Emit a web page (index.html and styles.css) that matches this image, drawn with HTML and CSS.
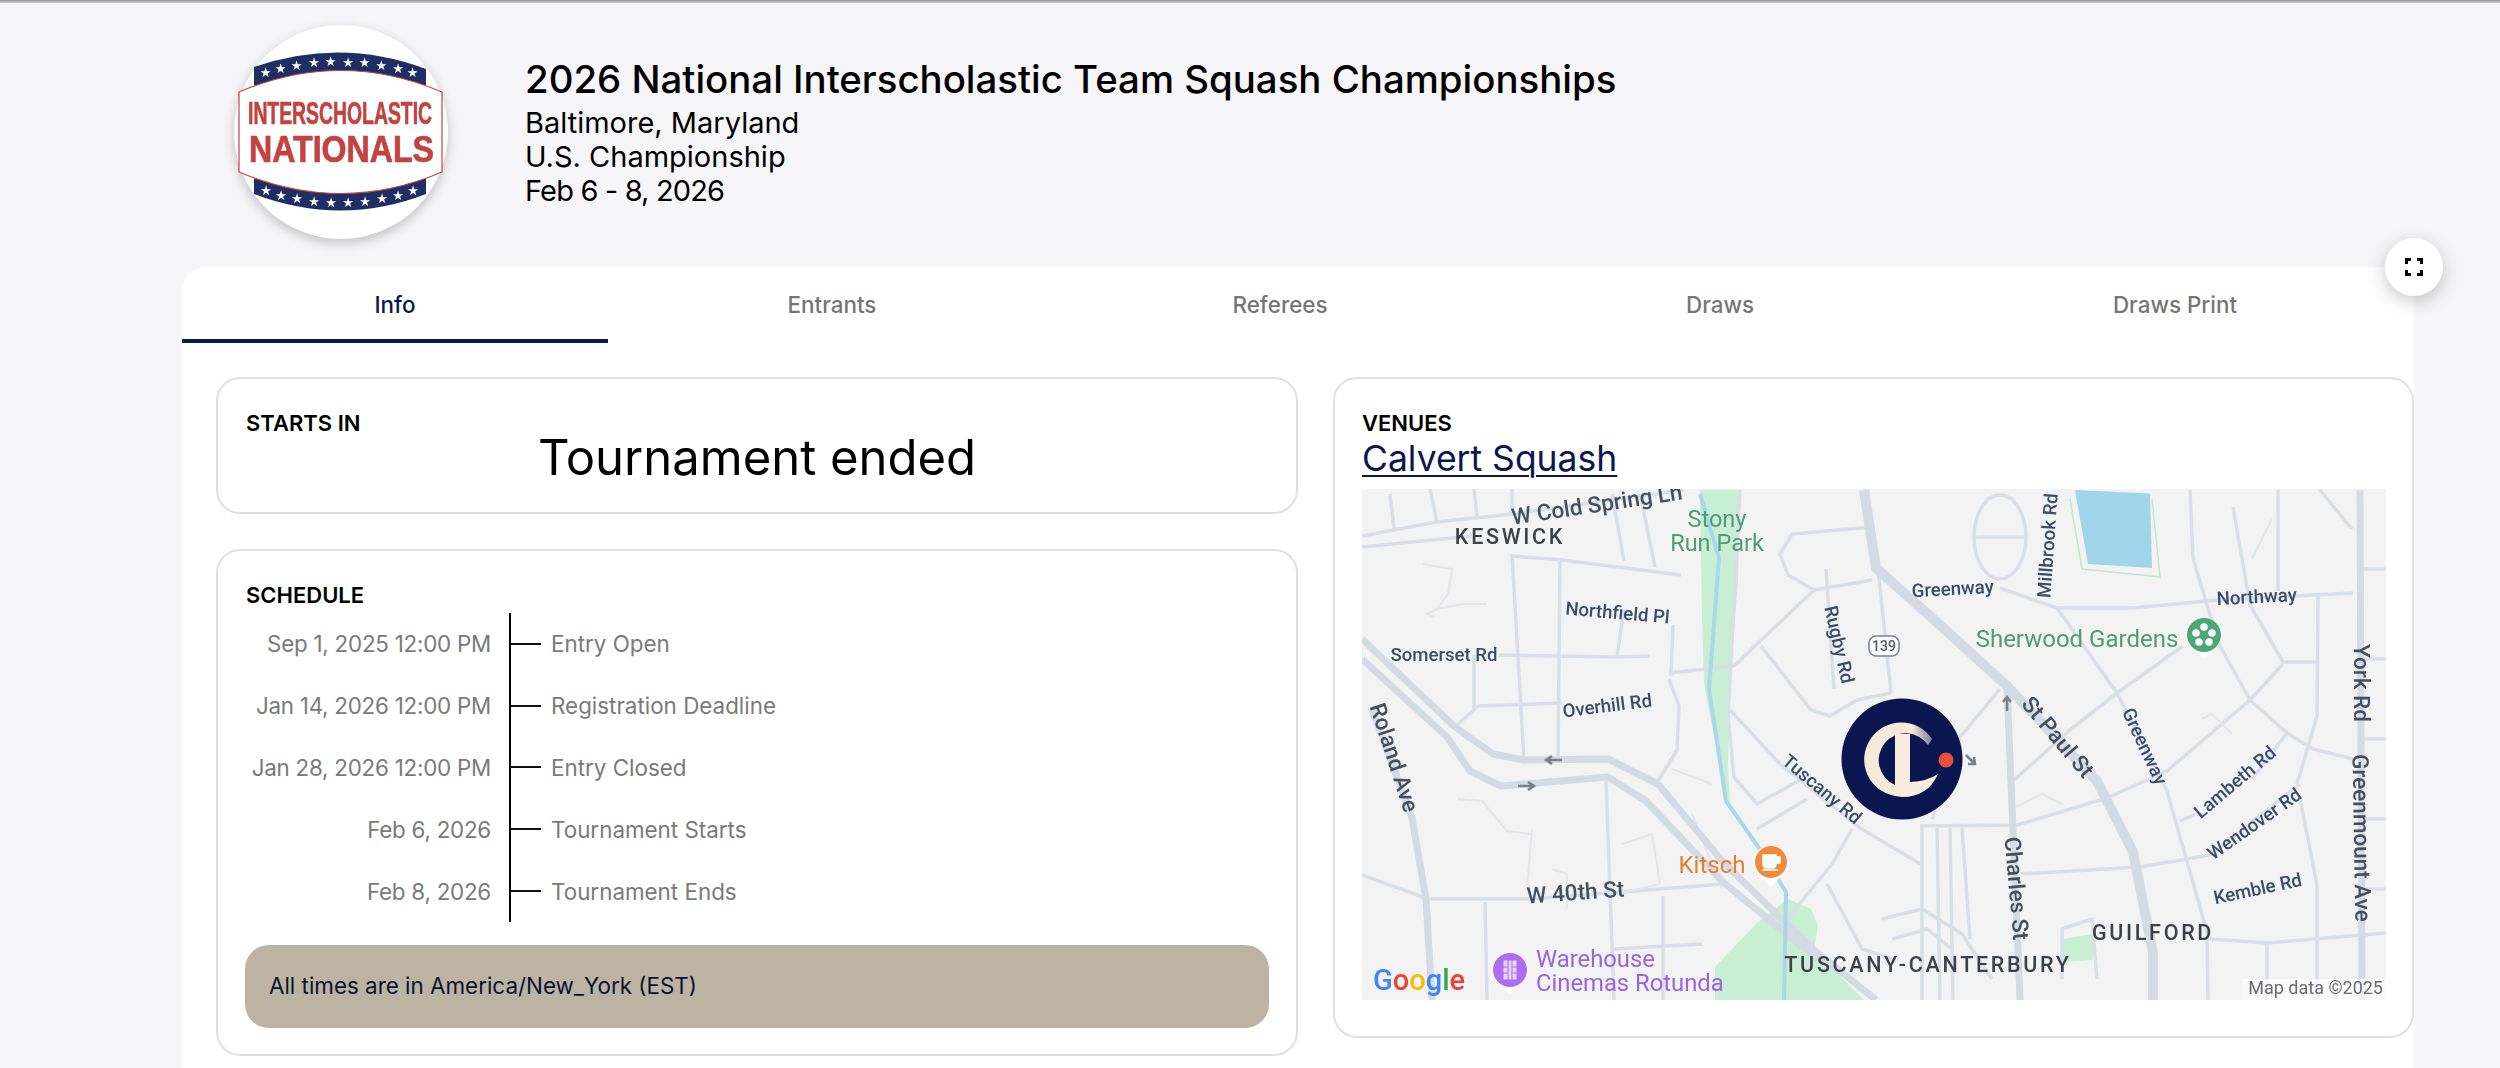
FILE: index.html
```html
<!DOCTYPE html>
<html lang="en">
<head>
<meta charset="utf-8">
<title>2026 National Interscholastic Team Squash Championships</title>
<link rel="stylesheet" href="styles.css">
</head>
<body>
<div class="topline"></div>
<div class="page">
  <header class="hero">
    <div class="crest">
      <svg viewBox="0 0 214 214" width="214" height="214">
        <path class="band" d="M20 42Q107 12 192 44V60H20Z"/>
        <path class="band" d="M20 154H192V169Q107 202 20 169Z"/>
        <g class="stars">
          <text x="31.7" y="52">★</text><text x="46.7" y="47.5">★</text><text x="62.7" y="45">★</text><text x="80" y="42">★</text><text x="96.7" y="41">★</text><text x="114" y="41.5">★</text><text x="130.7" y="42">★</text><text x="147.3" y="45">★</text><text x="164" y="47.5">★</text><text x="178.7" y="52">★</text>
          <text x="32" y="170">★</text><text x="47" y="175">★</text><text x="63" y="178">★</text><text x="80" y="180.5">★</text><text x="97" y="181.5">★</text><text x="114" y="181.5">★</text><text x="131" y="180.5">★</text><text x="148" y="178">★</text><text x="164" y="175">★</text><text x="179" y="170">★</text>
        </g>
        <path class="shield" d="M5 67Q107 24 208 67V147Q107 190 5 147Z"/>
        <text class="crest-a" x="14" y="99" textLength="184" lengthAdjust="spacingAndGlyphs">INTERSCHOLASTIC</text>
        <text class="crest-b" x="15" y="137" textLength="185" lengthAdjust="spacingAndGlyphs">NATIONALS</text>
      </svg>
    </div>
    <div class="hero-text">
      <h1>2026 National Interscholastic Team Squash Championships</h1>
      <p>Baltimore, Maryland</p>
      <p>U.S. Championship</p>
      <p class="when">Feb 6 - 8, 2026</p>
    </div>
  </header>

  <main class="panel">
    <button class="expand" aria-label="Full screen">
      <svg viewBox="0 0 18 18" width="18" height="18"><path d="M1.5 6V1.5H6M12 1.5H16.5V6M16.5 12V16.5H12M6 16.5H1.5V12"/></svg>
    </button>
    <nav class="tabs">
      <a class="tab active">Info</a>
      <a class="tab">Entrants</a>
      <a class="tab">Referees</a>
      <a class="tab">Draws</a>
      <a class="tab">Draws Print</a>
    </nav>
    <div class="content">
      <div class="col">
        <section class="card starts">
          <h2>STARTS IN</h2>
          <div class="ended">Tournament ended</div>
        </section>
        <section class="card schedule">
          <h2>SCHEDULE</h2>
          <div class="timeline">
            <div class="row"><span class="date">Sep 1, 2025 12:00 PM</span><span class="mark"></span><span class="what">Entry Open</span></div>
            <div class="row"><span class="date">Jan 14, 2026 12:00 PM</span><span class="mark"></span><span class="what">Registration Deadline</span></div>
            <div class="row"><span class="date">Jan 28, 2026 12:00 PM</span><span class="mark"></span><span class="what">Entry Closed</span></div>
            <div class="row"><span class="date">Feb 6, 2026</span><span class="mark"></span><span class="what">Tournament Starts</span></div>
            <div class="row"><span class="date">Feb 8, 2026</span><span class="mark"></span><span class="what">Tournament Ends</span></div>
          </div>
          <div class="note">All times are in America/New_York (EST)</div>
        </section>
      </div>
      <section class="card venues">
        <h2>VENUES</h2>
        <a class="venue-link">Calvert Squash</a>
        <svg class="map" viewBox="0 0 1024 511" width="1024" height="511">
          <defs>
            <linearGradient id="fade" x1="0" y1="0" x2="1" y2="0">
              <stop offset="0.7" stop-color="#f7ead9"/>
              <stop offset="1" stop-color="#7e8099"/>
            </linearGradient>
          </defs>
          <rect class="land" width="1024" height="511"/>
          <path class="park" d="M338 1L340 126L342 194L361 295L368 315L366 278L368 194L376 92L378 1Z"/>
          <path class="park" d="M426 410L449 420L456 437L452 461L502 511H353V478L395 434Z"/>
          <path class="park" d="M701 450L731 445V471L701 473Z"/>
          <path class="pond" d="M713 1L788 4.5L790 79L726 75Z"/>
          <path class="pond-edge" d="M708 10L720 80L798 88L790 10"/>
          <g class="r">
            <path d="M0 47L74 33L150 25L322 1"/>
            <path d="M0 58L110 47M28 5L32 40M68 0L75 33M112 0L115 27M150 0L150 25M250 5L262 72M278 5L293 78"/>
            <path d="M150 67L200 71L319 86"/>
            <path d="M150 65L162 271M198 72L196 271"/>
            <path d="M137 166L257 168L288 167M255 168L262 120M112 166L112 220"/>
            <path d="M93 238L116 217L200 214"/>
            <path d="M0 386L66 410L169 410L361 395"/>
            <path d="M66 410L70 511M123 413L125 511M244 292L252 511M301 407L301 511M252 460L340 455"/>
            <path d="M307 184L372 177L452 101L510 91"/>
            <path d="M307 190L317 217L315 261L296 292M311 136L309 187"/>
            <path d="M378 1L366 228L372 288L395 315L440 290M395 340L445 310"/>
            <path d="M368 221L418 275L498 339L560 376"/>
            <path d="M399 157L449 221L468 227L495 211L529 204"/>
            <path d="M510 38L430 45L418 65L426 86L452 101M464 80L472 200"/>
            <path d="M502 1L517 89L529 204"/>
            <path d="M638 99L695 119L771 119L855 111L991 104"/>
            <path d="M695 119L755 204L805 302L845 443L846 511"/>
            <path d="M821 157L755 204L708 241L651 292"/>
            <path d="M598 248L638 200M570 330L598 248"/>
            <path d="M921 175L888 211L805 282L745 309L655 336L558 337"/>
            <path d="M560 337V511M575 339L578 511M588 339L591 511M600 339L608 450"/>
            <path d="M828 1L831 69L845 116L858 157L888 211L925 244L951 260L991 270"/>
            <path d="M871 18L888 116L921 173L955 173"/>
            <path d="M956 106L955 227L935 295"/>
            <path d="M916 1V102M958 1L990 40"/>
            <path d="M818 332L833 325M925 244L890 290"/>
            <path d="M658 385L778 378L848 366L938 295"/>
            <path d="M848 450L905 454L1024 444M905 454V511M1000 80H1024M1000 170H1024M1000 250H1024M1000 330H1024M1000 400H1024"/>
            <path d="M938 309L955 396L955 511"/>
            <path d="M700 490V440L730 430L735 490"/>
            <path d="M520 430L560 420L600 445L630 490M530 450L565 440L590 460"/>
            <ellipse cx="638" cy="48" rx="26" ry="42"/>
            <path d="M612 48H664M0 170L85 248"/>
            <path d="M425 430L470 375L490 340M465 395L500 460L530 470"/>
          </g>
          <g class="r minor">
            <path d="M60 75L90 80L86 105L75 120L100 115L125 115M75 120L65 125L72 128"/>
            <path d="M95 310L120 312L145 342L170 345M170 340L165 400M190 380L205 385L205 420"/>
            <path d="M260 355L290 345L298 395L255 405M330 325L360 400M310 280L350 295"/>
            <path d="M650 320L680 305L700 315M840 230L850 225L870 245M910 30L890 70"/>
          </g>
          <g class="r major">
            <path d="M0 150L93 238L131 265L162 271L246 270L296 295L361 373L452 461L514 511"/>
            <path d="M0 170L85 248L108 282L139 297L246 288L284 312L361 393L456 471"/>
            <path d="M10 220L50 329L64 410L70 511"/>
            <path class="wide" d="M502 1L514 79L578 136L645 197L735 292L771 363L791 464L791 511"/>
            <path d="M645 197L651 342L658 511"/>
            <path d="M998 1L1000 511"/>
          </g>
          <path class="stream" d="M338 5L357 69L347 200L364 312L395 356L424 403L422 511"/>

          <text class="l navy" x="82" y="172">Somerset Rd</text>
          <text class="l navy" transform="translate(255 130) rotate(5)">Northfield Pl</text>
          <text class="l navy" transform="translate(246 223) rotate(-7)">Overhill Rd</text>
          <text class="l navy" transform="translate(471 157) rotate(77)">Rugby Rd</text>
          <text class="l navy" transform="translate(456 305) rotate(40)">Tuscany Rd</text>
          <text class="l navy" transform="translate(591 106) rotate(-3)">Greenway</text>
          <text class="l navy" transform="translate(692 57) rotate(-86)">Millbrook Rd</text>
          <text class="l navy" transform="translate(895 114) rotate(-3)">Northway</text>
          <text class="l navy" transform="translate(777 260) rotate(65)">Greenway</text>
          <text class="l navy" transform="translate(877 298) rotate(-40)">Lambeth Rd</text>
          <text class="l navy" transform="translate(896 340) rotate(-35)">Wendover Rd</text>
          <text class="l navy" transform="translate(897 406) rotate(-12)">Kemble Rd</text>

          <text class="l road" transform="translate(236 23) rotate(-8.5)">W Cold Spring Ln</text>
          <text class="l road" transform="translate(25 271) rotate(72)">Roland Ave</text>
          <text class="l road" transform="translate(214 411) rotate(-4)">W 40th St</text>
          <text class="l road" transform="translate(690 253) rotate(50)">St Paul St</text>
          <text class="l road" transform="translate(992 194) rotate(90)">York Rd</text>
          <text class="l road" transform="translate(992 349) rotate(89)">Greenmount Ave</text>
          <text class="l road" transform="translate(647 400) rotate(85)">Charles St</text>

          <text class="l hood" x="148" y="55">KESWICK</text>
          <text class="l hood" x="566" y="483">TUSCANY-CANTERBURY</text>
          <text class="l hood" x="791" y="451">GUILFORD</text>

          <text class="l green" x="355" y="38">Stony</text>
          <text class="l green" x="355" y="62">Run Park</text>
          <text class="l green sher" x="715" y="158">Sherwood Gardens</text>
          <text class="l kitsch" x="350" y="384">Kitsch</text>
          <text class="l cinema" x="174" y="478">Warehouse</text>
          <text class="l cinema" x="174" y="502">Cinemas Rotunda</text>

          <g class="shield139">
            <rect x="507" y="147" width="30" height="20" rx="7"/>
            <text x="522" y="162">139</text>
          </g>
          <g class="arrow">
            <path d="M200 271H184M190 267L184 271L190 275"/>
            <path d="M156 297H172M166 293L172 297L166 301"/>
            <path d="M645 222V208M641 213L645 208L649 213"/>
            <path d="M604 266L612 274M606 275L613 275L612 268"/>
          </g>

          <path class="pin-w" d="M392 380A18 18 0 1 1 426 380L409 398Z"/>
          <circle class="pin-kitsch" cx="409" cy="373" r="16"/>
          <path class="cup" d="M401 366H414V375Q414 379 410 379H405Q401 379 401 375ZM414 368H418V374H414M400 381H416"/>

          <path class="pin-w" d="M825 153A18 18 0 1 1 859 153L842 170Z"/>
          <circle class="pin-sher" cx="842" cy="146" r="17"/>
          <g class="petals">
            <circle cx="842" cy="138" r="3.8"/><circle cx="850" cy="144" r="3.8"/><circle cx="847" cy="153" r="3.8"/><circle cx="837" cy="153" r="3.8"/><circle cx="834" cy="144" r="3.8"/>
          </g>

          <path class="pin-w" d="M131 488A18 18 0 1 1 165 488L148 506Z"/>
          <circle class="pin-cin" cx="148" cy="481" r="17"/>
          <path class="film" d="M141 471H155V491H141ZM146 471V491M150 471V491M141 478H146M141 484H146M150 478H155M150 484H155"/>

          <rect class="attr-bg" x="880" y="490" width="144" height="21"/>
          <text class="attr" x="1021" y="505">Map data ©2025</text>

          <text class="goog" x="11" y="501"><tspan fill="#4285f4">G</tspan><tspan fill="#ea4335">o</tspan><tspan fill="#fbbc05">o</tspan><tspan fill="#4285f4">g</tspan><tspan fill="#34a853">l</tspan><tspan fill="#ea4335">e</tspan></text>

          <circle class="mk-bg" cx="540" cy="270" r="60.5"/>
          <path fill="url(#fade)" d="M570 250A37 37 0 1 0 533 307L533 296A27 27 0 1 1 566 256Z"/>
          <path class="mk-l" d="M533 245H548V293Q566 292 576 285Q566 308 540 308L533 307Z"/>
          <circle class="mk-dot" cx="584" cy="271" r="7.5"/>
        </svg>
      </section>
    </div>
  </main>
</div>
</body>
</html>
```

FILE: styles.css
```css
* { box-sizing: border-box; }
html, body { margin: 0; height: 1068px; overflow: hidden; }
body {
  background: #f6f6f9;
  font-family: "Inter", "Liberation Sans", sans-serif;
  color: #000;
}
.topline {
  height: 3px;
  background: linear-gradient(#8f8f8f, #d4d4d6);
}
.page { padding: 0 86px 0 182px; }

.hero {
  display: flex;
  align-items: center;
  gap: 77px;
  height: 264px;
  padding: 0 0 6px 52px;
}
.crest {
  width: 214px;
  height: 214px;
  border-radius: 50%;
  background: #fff;
  box-shadow: 0 4px 12px rgba(0, 0, 0, .22);
  flex: none;
}
.crest svg { display: block; filter: blur(.4px); }
.band { fill: #1f2f63; }
.stars text { fill: #fff; font: 13px "DejaVu Sans", sans-serif; text-anchor: middle; }
.shield { fill: #fff; stroke: #c4423f; stroke-width: 1.2; }
.crest-a { fill: #c4423f; stroke: #c4423f; stroke-width: .7; font: 700 32px "Liberation Sans", sans-serif; }
.crest-b { fill: #c4423f; stroke: #c4423f; stroke-width: .7; font: 700 36px "Liberation Sans", sans-serif; }

.hero-text h1 {
  margin: 0 0 5px;
  font-size: 38.4px;
  line-height: 44px;
  font-weight: 500;
}
.hero-text p {
  margin: 0;
  font-size: 29px;
  line-height: 34px;
}
.hero-text .when { letter-spacing: -.85px; }

.panel {
  position: relative;
  background: #fff;
  border-top-left-radius: 24px;
  height: 801px;
}
.expand {
  position: absolute;
  top: -29px;
  right: -29px;
  width: 58px;
  height: 58px;
  padding: 0;
  border: 0;
  border-radius: 50%;
  background: #fff;
  box-shadow: 0 5px 18px rgba(0, 0, 0, .22);
  display: flex;
  align-items: center;
  justify-content: center;
}
.expand path { fill: none; stroke: #000; stroke-width: 3; }

.tabs {
  display: grid;
  grid-template-columns: 426px 448px 448px 432px 478px;
  height: 76px;
}
.tab {
  display: flex;
  align-items: center;
  justify-content: center;
  padding-top: 2px;
  font-size: 22.4px;
  font-weight: 500;
  color: #757575;
  border-bottom: 4px solid transparent;
}
.tab.active { color: #0d1650; border-bottom-color: #0d1650; }

.content {
  display: grid;
  grid-template-columns: 1082px 1081px;
  column-gap: 35px;
  align-items: start;
  padding: 34px 0 0 34px;
}
.col { display: flex; flex-direction: column; gap: 35px; }
.card {
  background: #fff;
  border: 2px solid #e0e0e0;
  border-radius: 24px;
  padding: 28px;
}
.card h2 {
  margin: 0;
  font-size: 22px;
  line-height: 30px;
  font-weight: 600;
}
.starts { height: 137px; padding-top: 29px; }
.ended {
  text-align: center;
  font-size: 49px;
  line-height: 56px;
  margin-top: -8px;
}
.schedule { height: 507px; padding-top: 29px; }
.timeline { margin-top: 3px; height: 309px; display: flex; flex-direction: column; }
.row { flex: 1; display: flex; align-items: center; font-size: 22.4px; color: #7a7a7a; white-space: nowrap; }
.date { width: 245px; text-align: right; flex: none; letter-spacing: -.25px; }
.mark {
  flex: none;
  width: 32px;
  height: 100%;
  margin-left: 18px;
  margin-right: 10px;
  border-left: 2px solid #000;
  display: flex;
  align-items: center;
}
.mark::after { content: ""; display: block; width: 100%; height: 2px; background: #111; }
.note {
  margin: 23px -1px 0;
  height: 83px;
  border-radius: 24px;
  background: #bdb3a2;
  color: #0a1230;
  font-size: 22.4px;
  display: flex;
  align-items: center;
  padding: 0 0 2px 24px;
}
.venues { height: 661px; padding: 29px 27px; }
.venue-link {
  display: block;
  font-size: 35.5px;
  line-height: 42px;
  color: #0d1650;
  text-decoration: underline;
  text-decoration-thickness: 2px;
  text-underline-offset: 4px;
  margin-bottom: 9px;
}
.map { display: block; filter: blur(.5px); }
.land { fill: #f3f3f4; }
.park { fill: #c8eed3; }
.pond { fill: #9fd6ea; }
.pond-edge { fill: none; stroke: #bfe8cd; stroke-width: 1.5; }
.stream { fill: none; stroke: #a9d8ea; stroke-width: 4; }
.r { fill: none; stroke: #dadfe6; stroke-width: 3.5; stroke-linejoin: round; }
.r.minor { stroke: #e4e6ea; stroke-width: 2; }
.r.major { stroke: #d5dbe4; stroke-width: 7; }
.r.major .wide { stroke-width: 10; }
.l { font-family: "Roboto", "Liberation Sans", sans-serif; text-anchor: middle; }
.navy { fill: #3a4c6c; font-size: 18.6px; font-weight: 500; }
.road { fill: #444f5f; font-size: 22.5px; font-weight: 500; }
.hood { fill: #3d4148; font-size: 21.5px; font-weight: 500; letter-spacing: 2.7px; }
.green { fill: #4e9c78; font-size: 23.5px; }
.sher { font-size: 24px; }
.kitsch { fill: #e57f2f; font-size: 24px; }
.cinema { fill: #9a63e0; font-size: 23.8px; text-anchor: start; }
.shield139 rect { fill: #f8f8f8; stroke: #7b8290; stroke-width: 1.5; }
.shield139 text { fill: #59606c; font: 500 14px "Roboto", sans-serif; text-anchor: middle; }
.arrow path { fill: none; stroke: #7c8086; stroke-width: 2.5; }
.pin-w { fill: #fff; }
.pin-kitsch { fill: #f08a3c; }
.cup { fill: #fff; stroke: #fff; stroke-width: 1.5; }
.pin-sher { fill: #4ca678; }
.petals circle { fill: #fff; }
.pin-cin { fill: #ac6df0; }
.film { fill: #e6d4fb; stroke: #ac6df0; stroke-width: 1; }
.attr-bg { fill: rgba(255, 255, 255, .6); }
.attr { fill: #6b6b6b; font: 18px "Roboto", sans-serif; text-anchor: end; }
.goog { font: 500 29px "Roboto", sans-serif; }
.mk-bg { fill: #0b1650; }
.mk-l { fill: #f8ecdd; }
.mk-dot { fill: #ea4f3d; }
```
